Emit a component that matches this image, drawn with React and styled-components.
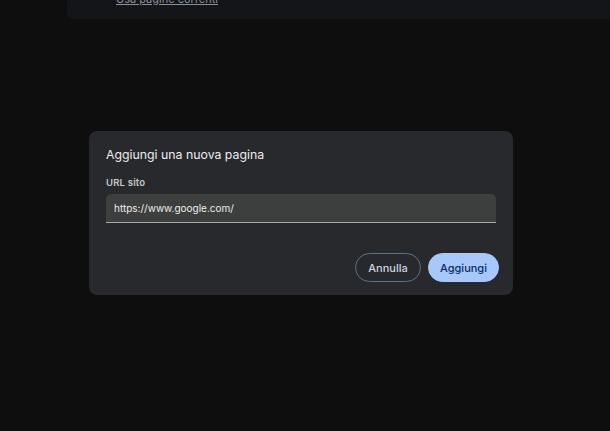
import React from 'react';
import styled, { createGlobalStyle } from 'styled-components';

const Global = createGlobalStyle`
  html, body {
    margin: 0;
    padding: 0;
    background: #0e0e0f;
    font-family: Inter, "Noto Sans", sans-serif;
  }
`;

const Page = styled.div`
  width: 610px;
  height: 431px;
  overflow: hidden;
  background: #0e0e0f;
`;

const TopCard = styled.div`
  margin-left: 67px;
  height: 19px;
  background: #141518;
  border-bottom-left-radius: 6px;
  padding-left: 49px;
  overflow: hidden;
`;

const Link = styled.a`
  display: block;
  margin-top: -7px;
  font-size: 11px;
  line-height: 13px;
  color: #8a9099;
  text-decoration: underline;
`;

const Dialog = styled.div`
  box-sizing: border-box;
  margin: 112px 0 0 89px;
  width: 424px;
  height: 164px;
  padding: 16px 17px 13px 17px;
  background: #28292c;
  border-radius: 8px;
  display: flex;
  flex-direction: column;
`;

const Title = styled.div`
  font-size: 12.3px;
  line-height: 15px;
  color: #ececec;
`;

const Label = styled.div`
  margin-top: 14px;
  font-size: 9.5px;
  line-height: 13px;
  font-weight: 600;
  color: #c7c9cc;
  letter-spacing: 0.2px;
`;

const Input = styled.div`
  box-sizing: border-box;
  margin-top: 5px;
  height: 29px;
  width: 390px;
  padding-left: 8px;
  display: flex;
  align-items: center;
  background: #3d3f3e;
  border-bottom: 1px solid #a5a7a6;
  border-radius: 5px 5px 0 0;
  font-size: 10px;
  color: #ececec;
`;

const Actions = styled.div`
  margin-top: auto;
  margin-right: -3px;
  display: flex;
  justify-content: flex-end;
  gap: 7px;
`;

const Button = styled.button`
  box-sizing: border-box;
  height: 29px;
  width: ${p => (p.$primary ? 71 : 66)}px;
  padding: 0;
  border-radius: 15px;
  font-family: inherit;
  font-size: 11px;
  font-weight: 500;
  border: 1px solid ${p => (p.$primary ? '#a8c7fa' : '#5b7384')};
  background: ${p => (p.$primary ? '#a8c7fa' : 'transparent')};
  color: ${p => (p.$primary ? '#0a2e63' : '#cbd6e2')};
`;

export default function App() {
  return (
    <Page>
      <Global />
      <TopCard>
        <Link>Usa pagine correnti</Link>
      </TopCard>
      <Dialog>
        <Title>Aggiungi una nuova pagina</Title>
        <Label>URL sito</Label>
        <Input>https://www.google.com/</Input>
        <Actions>
          <Button>Annulla</Button>
          <Button $primary>Aggiungi</Button>
        </Actions>
      </Dialog>
    </Page>
  );
}
